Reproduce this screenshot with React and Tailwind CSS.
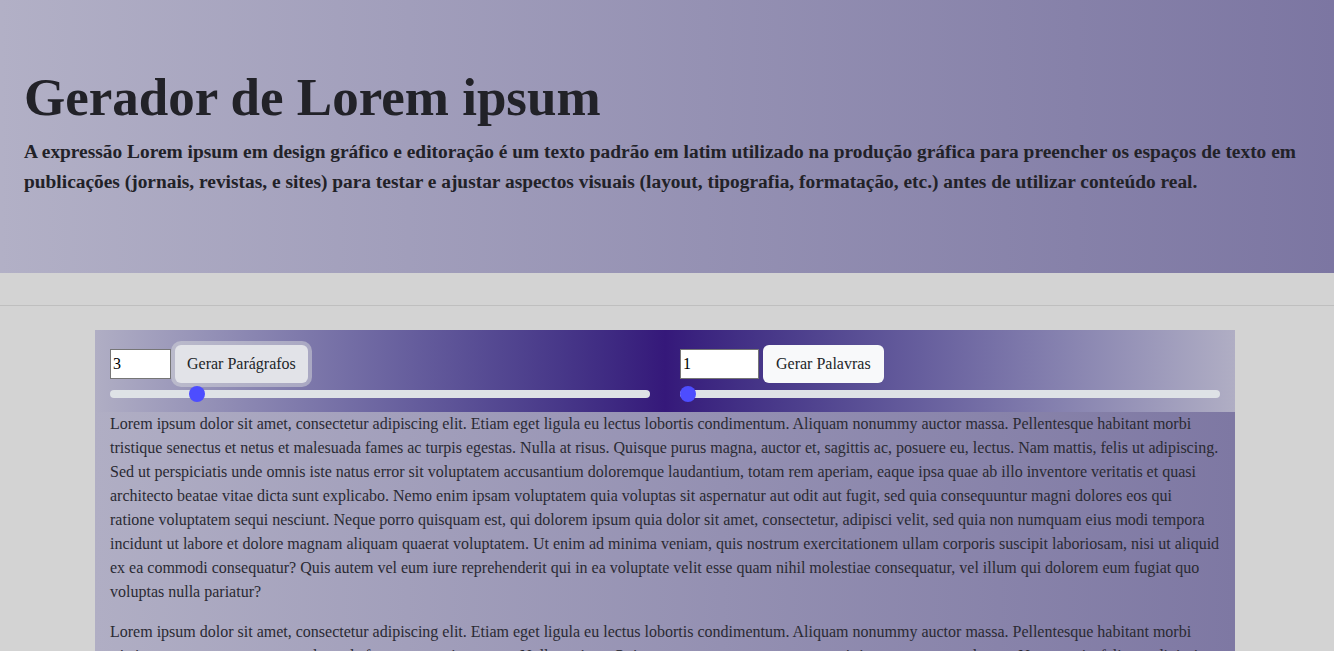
import React from 'react';

const LOREM =
  'Lorem ipsum dolor sit amet, consectetur adipiscing elit. Etiam eget ligula eu lectus lobortis condimentum. Aliquam nonummy auctor massa. Pellentesque habitant morbi tristique senectus et netus et malesuada fames ac turpis egestas. Nulla at risus. Quisque purus magna, auctor et, sagittis ac, posuere eu, lectus. Nam mattis, felis ut adipiscing. Sed ut perspiciatis unde omnis iste natus error sit voluptatem accusantium doloremque laudantium, totam rem aperiam, eaque ipsa quae ab illo inventore veritatis et quasi architecto beatae vitae dicta sunt explicabo. Nemo enim ipsam voluptatem quia voluptas sit aspernatur aut odit aut fugit, sed quia consequuntur magni dolores eos qui ratione voluptatem sequi nesciunt. Neque porro quisquam est, qui dolorem ipsum quia dolor sit amet, consectetur, adipisci velit, sed quia non numquam eius modi tempora incidunt ut labore et dolore magnam aliquam quaerat voluptatem. Ut enim ad minima veniam, quis nostrum exercitationem ullam corporis suscipit laboriosam, nisi ut aliquid ex ea commodi consequatur? Quis autem vel eum iure reprehenderit qui in ea voluptate velit esse quam nihil molestiae consequatur, vel illum qui dolorem eum fugiat quo voluptas nulla pariatur?';

const Slider = ({ pct }) => (
  <div className="relative h-4 mt-[3px] flex items-center">
    <div className="h-2 w-full rounded-full bg-[#dee2e6]" />
    <div
      className="absolute top-0 h-4 w-4 rounded-full bg-[#4d4dff]"
      style={{ left: `calc(${pct} * (100% - 16px))` }}
    />
  </div>
);

export default function App() {
  const [paras] = React.useState(3);
  const [words] = React.useState(1);

  return (
    <div className="min-h-screen bg-[#d3d3d3] font-['Liberation_Serif',serif] text-[#212529]">
      <header className="h-[273px] px-6 pt-[66px] bg-gradient-to-r from-[#b2b0c6] to-[#7c76a2]">
        <h1 className="text-[53px] leading-[1.2] font-bold text-[#222228] mb-[7px]">Gerador de Lorem ipsum</h1>
        <p className="text-[19.4px] leading-[30px] font-bold text-[#222228]">
          A expressão Lorem ipsum em design gráfico e editoração é um texto padrão em latim utilizado na produção gráfica para preencher os espaços de texto em publicações (jornais, revistas, e sites) para testar e ajustar aspectos visuais (layout, tipografia, formatação, etc.) antes de utilizar conteúdo real.
        </p>
      </header>

      <hr className="mt-8 border-0 border-t border-[#bfbfbf]" />

      <main className="ml-[95px] w-[1140px] mt-6">
        <div className="grid grid-cols-2 gap-[30px] px-[15px] pt-[15px] pb-[10px] bg-gradient-to-r from-[#b0aec4] via-[#35187a] to-[#b0aec4]">
          <div>
            <div className="flex items-center gap-1">
              <input
                type="number"
                defaultValue={paras}
                className="w-[61px] h-[30px] bg-white border border-[#767676] px-[2px] text-[16px] text-black outline-none [appearance:textfield]"
              />
              <button className="h-[38px] px-3 rounded-md bg-[#e2e3e8] text-[16px] text-[#212529] shadow-[0_0_0_4px_rgba(216,217,219,0.5)]">
                Gerar Parágrafos
              </button>
            </div>
            <Slider pct={0.15} />
          </div>
          <div>
            <div className="flex items-center gap-1">
              <input
                type="number"
                defaultValue={words}
                className="w-[79px] h-[30px] bg-white border border-[#767676] px-[2px] text-[16px] text-black outline-none [appearance:textfield]"
              />
              <button className="h-[38px] px-[13px] rounded-md bg-[#f8f9fa] text-[16px] text-[#212529]">
                Gerar Palavras
              </button>
            </div>
            <Slider pct={0} />
          </div>
        </div>

        <div className="px-[15px] bg-gradient-to-r from-[#b0aec4] to-[#7e78a3] text-[16px] leading-6 text-[#2a2a33]">
          {Array.from({ length: paras }).map((_, i) => (
            <p key={i} className="mb-4">{LOREM}</p>
          ))}
        </div>
      </main>
    </div>
  );
}
